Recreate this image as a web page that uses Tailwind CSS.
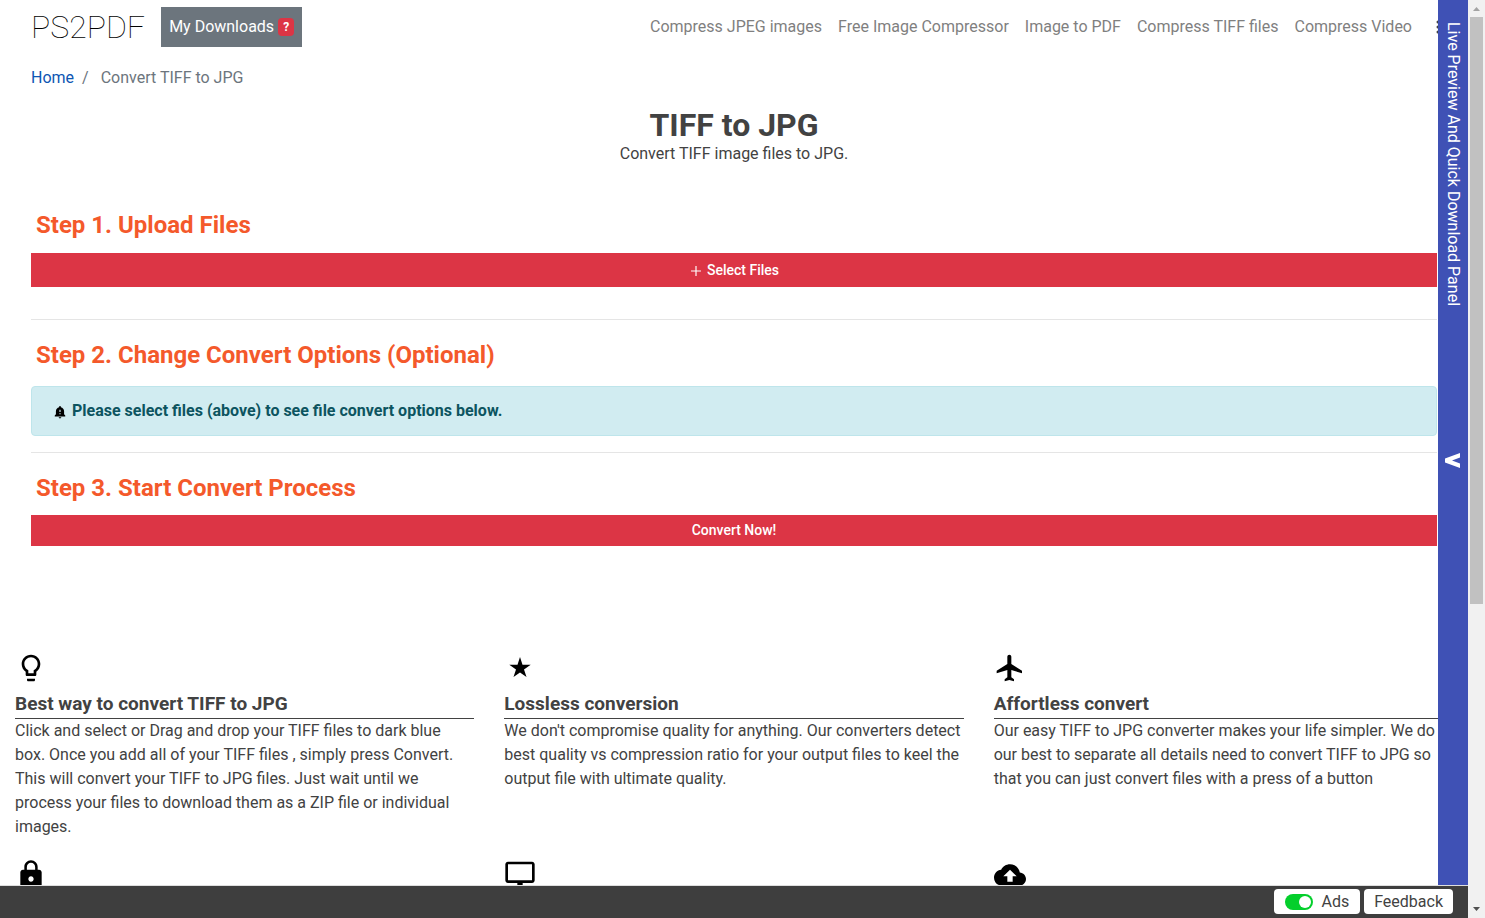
<!DOCTYPE html>
<html lang="en">
<head>
<meta charset="utf-8">
<meta name="viewport" content="width=device-width, initial-scale=1">
<title>TIFF to JPG</title>
<script src="https://cdn.jsdelivr.net/npm/@tailwindcss/browser@4"></script>
</head>
<body class="flex h-screen overflow-hidden bg-white font-['Roboto',sans-serif] text-base text-[#424242]">
<div class="relative flex min-w-0 flex-1 flex-col">
  <div class="min-h-0 flex-1 overflow-hidden">
    <header class="flex h-[54px] items-center overflow-hidden pl-[31px]">
      <a href="#" class="text-[32px] leading-10 font-thin text-black">PS2PDF</a>
      <button class="ml-4 flex h-10 shrink-0 items-center bg-[#6c757d] px-2 text-white">My Downloads<span class="ml-1 rounded bg-[#dc3545] px-[5px] py-[3px] text-xs leading-3 font-bold">?</span></button>
      <nav class="ml-auto flex items-center gap-4 whitespace-nowrap text-[#7f7f7f]">
        <a href="#">Compress JPEG images</a>
        <a href="#">Free Image Compressor</a>
        <a href="#">Image to PDF</a>
        <a href="#">Compress TIFF files</a>
        <a href="#">Compress Video</a>
      </nav>
      <button aria-label="More" class="mr-6 ml-4 flex w-4 justify-end"><svg class="h-4 w-2" viewBox="0 0 8 16" fill="#424242"><circle cx="2" cy="3" r="1.500"/><circle cx="2" cy="8" r="1.500"/><circle cx="2" cy="13" r="1.500"/></svg></button>
    </header>

    <main>
      <div class="mx-[31px]">
        <nav class="flex pt-3 leading-6 text-[#6c757d]" aria-label="Breadcrumb"><a href="#" class="text-[#0d56b3]">Home</a><span class="px-2">/</span><span class="pl-1">Convert TIFF to JPG</span></nav>
        <div class="mt-[19px] text-center">
          <h1 class="text-[32px] leading-8 font-bold">TIFF to JPG</h1>
          <p class="pt-px leading-6">Convert TIFF image files to JPG.</p>
        </div>
        <section class="mt-[43px]">
          <h2 class="pl-[5px] text-2xl leading-8 font-bold text-[#f4592b]">Step 1. Upload Files</h2>
          <button class="mt-3 flex h-[34px] w-full items-center justify-center gap-1 bg-[#dc3545] text-sm font-medium text-white"><svg class="mt-0.5 h-3.5 w-3.5" viewBox="0 0 24 24" fill="currentColor"><path d="M20.500 13h-7.500v7.500h-2V13H3.500v-2H11V3.500h2V11h7.500z"/></svg>Select Files</button>
        </section>
        <hr class="mt-8 border-[#e5e5e5]">
        <section class="mt-[19px]">
          <h2 class="pl-[5px] text-2xl leading-8 font-bold text-[#f4592b]">Step 2. Change Convert Options (Optional)</h2>
          <div class="mt-[15px] flex h-[50px] items-center gap-[5px] rounded border border-[#bee5eb] bg-[#d1ecf1] px-[21px] font-bold text-[#0c5460]"><svg class="mt-0.5 h-3.5 w-3.5" viewBox="0 0 24 24" fill="#000"><path fill-rule="evenodd" d="M12 23a2.500 2.500 0 0 0 2.400-2h-4.800a2.500 2.500 0 0 0 2.400 2zM19 16v-5.500c0-3.100-2.300-5.600-5.500-6.500v-1a1.500 1.500 0 0 0-3 0v1C7.300 4.900 5 7.400 5 10.500V16l-2 2v1.500h18V18zM13 16h-2v-2h2zm0-4h-2V8h2z"/></svg>Please select files (above) to see file convert options below.</div>
        </section>
        <hr class="mt-4 border-[#e5e5e5]">
        <section class="mt-[19px]">
          <h2 class="pl-[5px] text-2xl leading-8 font-bold text-[#f4592b]">Step 3. Start Convert Process</h2>
          <button class="mt-[11px] block h-[31px] w-full bg-[#dc3545] pb-px text-sm font-medium text-white">Convert Now!</button>
        </section>
      </div>

      <div class="mt-[106px] grid grid-cols-3 gap-x-[30px] gap-y-5 px-[15px]">
        <section>
          <svg class="h-8 w-8" viewBox="0 0 24 24"><path d="M9 21c0 .55.45 1 1 1h4c.55 0 1-.45 1-1v-1H9v1zm3-19C8.140 2 5 5.140 5 9c0 2.380 1.190 4.470 3 5.740V17c0 .55.45 1 1 1h6c.55 0 1-.45 1-1v-2.260c1.810-1.270 3-3.360 3-5.740 0-3.860-3.140-7-7-7zm2.850 11.100l-.85.6V16h-4v-2.300l-.85-.6C7.800 12.160 7 10.630 7 9c0-2.760 2.240-5 5-5s5 2.240 5 5c0 1.630-.8 3.160-2.150 4.100z"/></svg>
          <h3 class="mt-1 border-b border-[#424242] pt-1 pb-0.5 text-[19px] leading-6 font-bold">Best way to convert TIFF to JPG</h3>
          <p class="leading-6">Click and select or Drag and drop your TIFF files to dark blue box. Once you add all of your TIFF files , simply press Convert. This will convert your TIFF to JPG files. Just wait until we process your files to download them as a ZIP file or individual images.</p>
        </section>
        <section>
          <svg class="h-8 w-8" viewBox="0 0 32 32"><path d="M16 5l2.500 7.800h8.200L20 17.500l2.500 7.500L16 20.400 9.500 25l2.500-7.500-6.700-4.700h8.200z"/></svg>
          <h3 class="mt-1 border-b border-[#424242] pt-1 pb-0.5 text-[19px] leading-6 font-bold">Lossless conversion</h3>
          <p class="leading-6">We don't compromise quality for anything. Our converters detect best quality vs compression ratio for your output files to keel the output file with ultimate quality.</p>
        </section>
        <section>
          <svg class="h-8 w-8" viewBox="0 0 24 24"><path d="M21 16v-2l-8-5V3.500c0-.83-.67-1.500-1.500-1.500S10 2.670 10 3.500V9l-8 5v2l8-2.500V19l-2 1.500V22l3.500-1 3.500 1v-1.500L13 19v-5.500l8 2.500z"/></svg>
          <h3 class="mt-1 border-b border-[#424242] pt-1 pb-0.5 text-[19px] leading-6 font-bold">Affortless convert</h3>
          <p class="leading-6">Our easy TIFF to JPG converter makes your life simpler. We do our best to separate all details need to convert TIFF to JPG so that you can just convert files with a press of a button</p>
        </section>
        <svg class="h-8 w-8" viewBox="0 0 24 24"><path d="M18 8h-1V6c0-2.760-2.240-5-5-5S7 3.240 7 6v2H6c-1.100 0-2 .9-2 2v10c0 1.100.9 2 2 2h12c1.100 0 2-.9 2-2V10c0-1.100-.9-2-2-2zm-6 9c-1.100 0-2-.9-2-2s.9-2 2-2 2 .9 2 2-.9 2-2 2zm3.100-9H8.900V6c0-1.710 1.390-3.100 3.100-3.100 1.710 0 3.100 1.390 3.100 3.100v2z"/></svg>
        <svg class="h-8 w-8" viewBox="0 0 24 24"><path d="M21 2H3c-1.100 0-2 .9-2 2v12c0 1.100.9 2 2 2h7v2H8v2h8v-2h-2v-2h7c1.100 0 2-.9 2-2V4c0-1.100-.9-2-2-2zm0 14H3V4h18v12z"/></svg>
        <svg class="h-8 w-8" viewBox="0 0 24 24"><path d="M19.350 10.040C18.670 6.590 15.640 4 12 4 9.110 4 6.600 5.640 5.350 8.040 2.340 8.360 0 10.910 0 14c0 3.310 2.690 6 6 6h13c2.760 0 5-2.240 5-5 0-2.640-2.050-4.780-4.650-4.960zM14 13v4h-4v-4H7l5-5 5 5h-3z"/></svg>
      </div>
    </main>
  </div>

  <button class="absolute top-0 right-0 bottom-[33px] w-[30px] bg-[#3f51b5] text-white">
    <span class="absolute top-[22px] left-[3px] leading-6 whitespace-nowrap [writing-mode:vertical-rl]">Live Preview And Quick Download Panel</span>
    <svg class="absolute top-1/2 left-[7px] mt-2.5 h-4 w-4" viewBox="0 0 16 16" fill="#fff"><path d="M15 0v4.500L7 7.500l8 3v4.500L0 9.500v-4z"/></svg>
  </button>

  <footer class="flex h-[33px] shrink-0 items-center justify-end gap-1 border-t border-[#dedede] bg-[#3e3e3e] pr-[15px] pb-px">
    <label class="flex h-[25px] items-center gap-2 rounded bg-white px-[11px]"><input type="checkbox" role="switch" checked class="relative h-4 w-7 appearance-none rounded-full bg-[#04cf2c] after:absolute after:top-0.5 after:right-0.5 after:h-3 after:w-3 after:rounded-full after:bg-white">Ads</label>
    <button class="h-[25px] rounded bg-white px-2.5 leading-6">Feedback</button>
  </footer>
</div>

<div class="flex w-[17px] shrink-0 flex-col items-center bg-[#f1f1f1]" aria-hidden="true">
  <svg class="h-[17px] w-[17px] shrink-0" viewBox="0 0 17 17"><path d="M5 11l3.500-4 3.500 4z" fill="#a3a3a3"/></svg>
  <div class="min-h-0 w-full flex-1 px-0.5"><div class="h-[66.400%] bg-[#c1c1c1]"></div></div>
  <svg class="h-[17px] w-[17px] shrink-0" viewBox="0 0 17 17"><path d="M5 6l3.500 4L12 6z" fill="#505050"/></svg>
</div>
</body>
</html>
